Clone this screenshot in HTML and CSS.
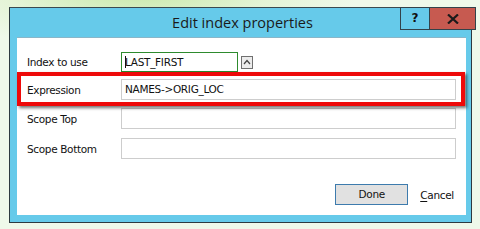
FILE: index.html
```html
<!DOCTYPE html>
<html>
<head>
<meta charset="utf-8">
<link rel="stylesheet" href="styles.css">
</head>
<body>
<div class="dialog">
  <div class="titlebar">
    <div class="title">Edit index properties</div>
    <div class="caption-buttons">
      <div class="btn-help">?</div>
      <div class="btn-close">
        <svg width="12" height="10" viewBox="0 0 12 10"><path d="M1 0.5 L11 9.5 M11 0.5 L1 9.5" stroke="#1a1a1a" stroke-width="2.2" fill="none"/></svg>
      </div>
    </div>
  </div>
  <div class="client">
    <div class="form">
      <div class="row r1">
        <label class="lbl">Index to use</label>
        <div class="field-wrap">
          <div class="input short focused"><span class="caret"></span>LAST_FIRST</div>
          <div class="spin">
            <svg width="8" height="6" viewBox="0 0 8 6"><path d="M1 5 L4 1.5 L7 5" stroke="#444" stroke-width="1.2" fill="none"/></svg>
          </div>
        </div>
      </div>
      <div class="row r2">
        <label class="lbl">Expression</label>
        <div class="input">NAMES-&gt;ORIG_LOC</div>
      </div>
      <div class="row r3">
        <label class="lbl">Scope Top</label>
        <div class="input"></div>
      </div>
      <div class="row r4">
        <label class="lbl">Scope Bottom</label>
        <div class="input"></div>
      </div>
    </div>
    <div class="actions">
      <div class="btn-done">Done</div>
      <div class="btn-cancel"><u>C</u>ancel</div>
    </div>
    <div class="highlight"></div>
  </div>
</div>
</body>
</html>
```
FILE: styles.css
```css
html, body {
  margin: 0;
  padding: 0;
}
body {
  width: 480px;
  height: 229px;
  overflow: hidden;
  background: radial-gradient(ellipse 220px 60px at 140px -10px, #c7e8a8 0%, #e4f4d6 60%, rgba(238,248,232,0) 100%), #eff9ea;
  font-family: "Noto Sans", "DejaVu Sans", sans-serif;
  padding-top: 7px;
  padding-left: 9px;
  box-sizing: border-box;
}
.dialog {
  width: 463px;
  height: 216px;
  border: 1px solid #2e3a40;
  border-top-color: #3a4a50;
  box-sizing: border-box;
  background: #66caea;
  display: flex;
  flex-direction: column;
}
.titlebar {
  height: 29px;
  display: flex;
  position: relative;
  align-items: flex-start;
}
.title {
  flex: 1;
  text-align: center;
  font-family: "Open Sans", "Noto Sans", sans-serif;
  font-size: 14.5px;
  color: #1a1a1a;
  line-height: 29px;
  padding-left: 4px;
}
.caption-buttons {
  position: absolute;
  right: -5px;
  top: -1px;
  display: flex;
}
.btn-help {
  width: 28px;
  height: 21px;
  border: 1px solid #33424a;
  border-right: none;
  box-sizing: content-box;
  font-family: "DejaVu Sans", sans-serif;
  font-weight: bold;
  font-size: 12px;
  color: #111;
  text-align: center;
  line-height: 20px;
  background: #66caea;
}
.btn-close {
  width: 45px;
  height: 21px;
  border: 1px solid #33424a;
  background: #c75a50;
  display: flex;
  align-items: center;
  justify-content: center;
}
.client {
  margin-left: 7px;
  margin-right: 5px;
  height: 178px;
  background: #ffffff;
  border-top: 1px solid #8ab6c8;
  box-sizing: border-box;
  position: relative;
  display: flex;
  flex-direction: column;
}
.form {
  padding: 14px 10px 0 10px;
  display: flex;
  flex-direction: column;
}
.row {
  display: flex;
  align-items: center;
}
.r2 { margin-top: 7px; }
.r3 { margin-top: 8px; }
.r4 { margin-top: 9px; }
.lbl {
  width: 94px;
  font-family: "DejaVu Sans", sans-serif;
  font-size: 10.5px;
  color: #111;
  letter-spacing: -0.35px;
}
.field-wrap {
  display: flex;
  align-items: center;
}
.input {
  flex: 1;
  height: 21px;
  border: 1px solid #cdcdcd;
  box-sizing: border-box;
  font-family: "DejaVu Sans", sans-serif;
  font-size: 10.5px;
  letter-spacing: -0.3px;
  color: #111;
  line-height: 19px;
  padding-left: 3px;
}
.input.short {
  flex: none;
  width: 117px;
  height: 20px;
  line-height: 18px;
  position: relative;
}
.input.focused {
  border-color: #2e8b2e;
}
.caret {
  display: inline-block;
  width: 1px;
  height: 12px;
  background: #111;
  vertical-align: -2px;
  margin-right: -1px;
}
.spin {
  margin-left: 3px;
  width: 10px;
  height: 11px;
  border: 1px solid #707070;
  background: #ececec;
  display: flex;
  align-items: center;
  justify-content: center;
}
.actions {
  margin-top: auto;
  margin-bottom: 10px;
  display: flex;
  justify-content: flex-end;
  align-items: center;
  padding-right: 12px;
}
.btn-done {
  width: 73px;
  height: 21px;
  box-sizing: border-box;
  border: 1px solid #3d7bad;
  background: #e1e1e1;
  font-family: "DejaVu Sans", sans-serif;
  font-size: 10.5px;
  letter-spacing: -0.3px;
  text-align: center;
  line-height: 19px;
  color: #111;
}
.btn-cancel {
  margin-left: 12px;
  font-family: "DejaVu Sans", sans-serif;
  font-size: 10.5px;
  letter-spacing: -0.3px;
  color: #111;
}
.btn-cancel u {
  text-decoration-thickness: 1px;
  text-underline-offset: 2px;
}
.highlight {
  position: absolute;
  left: 0;
  top: 34px;
  width: 448px;
  height: 34px;
  border: 4px solid #ee0a0a;
  box-sizing: border-box;
  box-shadow: 2px 2px 3px rgba(0,0,0,0.55);
}
```
